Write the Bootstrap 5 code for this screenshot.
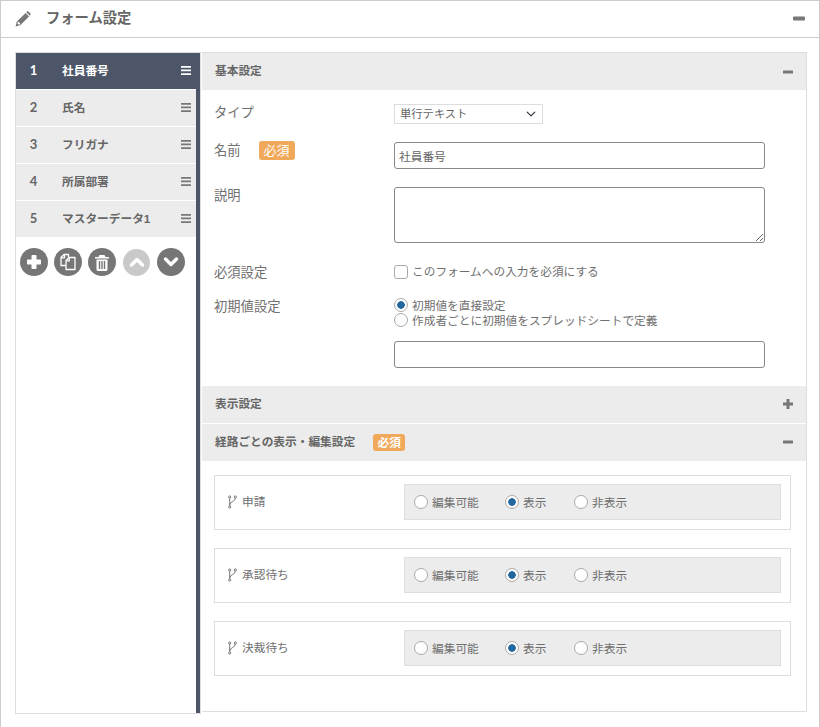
<!DOCTYPE html>
<html lang="ja">
<head>
<meta charset="utf-8">
<title>フォーム設定</title>
<link href="https://cdn.jsdelivr.net/npm/bootstrap@5.3.0/dist/css/bootstrap.min.css" rel="stylesheet">
<style>
html,body{height:727px;overflow:hidden;background:#fff}
body{font-family:"Liberation Sans","Noto Sans CJK JP",sans-serif;color:#666;font-size:12px;line-height:1.2}
.frame{height:760px;border:1px solid #ccc;border-bottom:0}
.frame-head{height:37px;border-bottom:1px solid #ccc;padding:0 14px 0 13px}
.frame-title{font-size:14.3px;font-weight:700;color:#666;margin-left:14px}
.frame-body{padding:14px 13px 0 14px;height:676px}
.side{width:186px;height:662px;border:1px solid #ddd;flex:none}
.side-inner{height:100%;border-right:4px solid #4d5668}
.step{height:36px;margin-bottom:1px;background:#ececec;color:#666;font-weight:700}
.step-on{background:#4d5668;color:#fff;margin-right:-4px}
.step-no{width:36px;padding-right:1px;font-size:13px;font-family:"Lato","Noto Sans CJK JP",sans-serif;flex:none;background:inherit}
.step-name{flex:1;margin-left:1px;height:100%;padding:0 5px 0 9px;font-size:11.7px;background:inherit}
.step-name span{padding-top:1px}
.step-on .step-name{padding-right:9px}
.bars{width:10px;height:9px;flex:none;margin-bottom:2px}
.tools{gap:6px;padding:10px 0 0 4px}
.tool{width:28px;height:28px;border-radius:50%;background:#767676;flex:none}
.tool-off{background:#c9c9c9;width:27px;height:27px;margin:0 1px}
.main{width:605px;height:660px;margin-left:1px;border:1px solid #ddd;border-left:0;flex:none}
.sec{height:37px;background:#ececec;padding:0 13px 0 13px;font-size:11.7px;font-weight:700;color:#666;margin-bottom:1px}
.sec-req{gap:18px}
.req{background:#f0a95a;color:#fff;font-size:13px;font-weight:400;border-radius:3px;width:36px;height:19px;line-height:19px;text-align:center;display:inline-block;margin-top:-2px}
.sec .req{width:32px;height:17px;line-height:17px;font-size:11.7px;font-weight:700;margin-top:0}
.form-area{padding:14px 0 18px 12px}
.fld{display:flex;margin-bottom:18px}
.fld-wide{margin-bottom:21px}
.fld-tight{margin-bottom:17px}
.fld-label{width:180px;padding-top:1px;font-size:13.3px;color:#6f6f6f;flex:none;display:flex;align-items:flex-start;gap:18px}
.tx{width:371px;height:27px;border:1px solid #888;border-radius:3px;padding:0 4px;font-size:11.7px;color:#666;display:block;outline:0;font-family:inherit}
textarea.tx{height:56px;resize:both}
.sub-input{margin-top:13px}
.pick{width:149px;height:20px;padding:0 20px 0 5px;font-size:11.3px;line-height:18px;color:#666;border:1px solid #ddd;border-radius:0;background-position:right 5px center;background-size:12px 10px;font-family:inherit}
.opt{display:flex;align-items:center;gap:4px;font-size:11.7px;color:#6f6f6f;line-height:15px;height:15px;margin:0}
.opt input{appearance:none;width:14px;height:14px;margin:0;flex:none;border:1px solid #aaa;background:#fff}
.opt input[type=checkbox]{border-radius:3px}
.opt input[type=radio]{border-radius:50%}
.opt input[type=radio]:checked{background:radial-gradient(circle,#23679f 0 3.5px,#fff 4px)}
.routes{padding:14px 15px 0 12px}
.route{height:55px;border:1px solid #ddd;margin-bottom:18px;padding:0 9px 0 13px}
.route-name{width:176px;font-size:11.7px;color:#6f6f6f;gap:5px;flex:none}
.route-opts{flex:1;height:36px;background:#ececec;border:1px solid #ddd;padding-left:9px}
.route-opts .opt:nth-child(1){width:91px}
.route-opts .opt:nth-child(2){width:69px}
</style>
</head>
<body>
<div class="frame">
  <div class="frame-head d-flex align-items-center justify-content-between">
    <div class="d-flex align-items-center">
      <svg width="18" height="18" viewBox="0 0 18 18"><path fill="#777" d="M11.6 2.900l3.500 3.500-8.900 8.900-4.600 1.100 1.100-4.600zM12.700 1.800c.6-.6 1.400-.6 2 0l1.500 1.500c.6.6.6 1.400 0 2l-.4.500-3.500-3.500z"/><path fill="#fff" d="M3.600 12.200l.9-.4 1.700 1.700-.4.900-1.100.3-1.400-1.400z"/></svg>
      <span class="frame-title">フォーム設定</span>
    </div>
    <svg width="12" height="12" viewBox="0 0 12 12"><rect y="3.500" width="12" height="4" rx="1" fill="#777"/></svg>
  </div>
  <div class="frame-body d-flex">
    <div class="side">
      <div class="side-inner">
        <div class="step step-on d-flex align-items-center"><div class="step-no d-flex align-items-center justify-content-center h-100">1</div><div class="step-name d-flex align-items-center justify-content-between"><span>社員番号</span><svg class="bars" viewBox="0 0 10 9"><path fill="#fff" d="M0 0h10v1.700H0zM0 3.600h10v1.700H0zM0 7.300h10V9H0z"/></svg></div></div>
        <div class="step d-flex align-items-center"><div class="step-no d-flex align-items-center justify-content-center h-100">2</div><div class="step-name d-flex align-items-center justify-content-between"><span>氏名</span><svg class="bars" viewBox="0 0 10 9"><path fill="#777" d="M0 0h10v1.700H0zM0 3.600h10v1.700H0zM0 7.300h10V9H0z"/></svg></div></div>
        <div class="step d-flex align-items-center"><div class="step-no d-flex align-items-center justify-content-center h-100">3</div><div class="step-name d-flex align-items-center justify-content-between"><span>フリガナ</span><svg class="bars" viewBox="0 0 10 9"><path fill="#777" d="M0 0h10v1.700H0zM0 3.600h10v1.700H0zM0 7.300h10V9H0z"/></svg></div></div>
        <div class="step d-flex align-items-center"><div class="step-no d-flex align-items-center justify-content-center h-100">4</div><div class="step-name d-flex align-items-center justify-content-between"><span>所属部署</span><svg class="bars" viewBox="0 0 10 9"><path fill="#777" d="M0 0h10v1.700H0zM0 3.600h10v1.700H0zM0 7.300h10V9H0z"/></svg></div></div>
        <div class="step d-flex align-items-center"><div class="step-no d-flex align-items-center justify-content-center h-100">5</div><div class="step-name d-flex align-items-center justify-content-between"><span>マスターデータ1</span><svg class="bars" viewBox="0 0 10 9"><path fill="#777" d="M0 0h10v1.700H0zM0 3.600h10v1.700H0zM0 7.300h10V9H0z"/></svg></div></div>
        <div class="tools d-flex align-items-center">
          <div class="tool d-flex align-items-center justify-content-center"><svg width="16" height="16" viewBox="0 0 16 16"><path fill="#fff" d="M6.300 1h3.400a.8.8 0 0 1 .8.800v3.700h3.700a.8.8 0 0 1 .8.800v3.400a.8.8 0 0 1-.8.800h-3.700v3.700a.8.8 0 0 1-.8.800H6.300a.8.8 0 0 1-.8-.8v-3.700H1.800a.8.8 0 0 1-.8-.8V6.300a.8.8 0 0 1 .8-.8h3.700V1.800a.8.8 0 0 1 .8-.8z"/></svg></div>
          <div class="tool d-flex align-items-center justify-content-center"><svg width="18" height="18" viewBox="0 0 18 18" fill="none" stroke="#fff" stroke-width="1.300" stroke-linejoin="round"><path d="M6.500 12.500H2V4.500L5 1.500h4.500v3"/><path d="M5.500 1.800V4.800H2.300"/><path d="M7 16.500V7.500L10 4.500h6v12z"/><path d="M10.300 4.800v3H7.300"/></svg></div>
          <div class="tool d-flex align-items-center justify-content-center"><svg width="16" height="17" viewBox="0 0 16 17"><path fill="#fff" d="M5.500 1h5l1 2H15v1.500H1V3h3.500zM2.500 5.500h11v9.700c0 1-.7 1.800-1.600 1.800H4.100c-.9 0-1.600-.8-1.600-1.800zM4.800 7v8h1.400V7zm2.500 0v8h1.400V7zm2.500 0v8h1.400V7z"/></svg></div>
          <div class="tool tool-off d-flex align-items-center justify-content-center"><svg width="16" height="12" viewBox="0 0 16 12"><path fill="none" stroke="#fff" stroke-width="3.400" stroke-linecap="round" stroke-linejoin="round" d="M2.500 9L8 3.500 13.500 9"/></svg></div>
          <div class="tool d-flex align-items-center justify-content-center"><svg width="16" height="12" viewBox="0 0 16 12"><path fill="none" stroke="#fff" stroke-width="3.400" stroke-linecap="round" stroke-linejoin="round" d="M2.500 3L8 8.500 13.500 3"/></svg></div>
        </div>
      </div>
    </div>
    <div class="main">
      <div class="sec d-flex align-items-center justify-content-between mb-0"><span>基本設定</span><svg width="10" height="10" viewBox="0 0 10 10"><rect y="3.500" width="10" height="3" rx=".6" fill="#777"/></svg></div>
      <div class="form-area">
        <div class="fld"><div class="fld-label">タイプ</div><select class="form-select pick"><option>単行テキスト</option></select></div>
        <div class="fld"><div class="fld-label"><span>名前</span><span class="req">必須</span></div><input class="tx" type="text" value="社員番号"></div>
        <div class="fld fld-wide"><div class="fld-label">説明</div><textarea class="tx"></textarea></div>
        <div class="fld fld-tight"><div class="fld-label">必須設定</div><label class="opt"><input type="checkbox">このフォームへの入力を必須にする</label></div>
        <div class="fld mb-0"><div class="fld-label">初期値設定</div>
          <div>
            <label class="opt"><input type="radio" name="d" checked>初期値を直接設定</label>
            <label class="opt"><input type="radio" name="d">作成者ごとに初期値をスプレッドシートで定義</label>
            <input class="tx sub-input" type="text">
          </div>
        </div>
      </div>
      <div class="sec d-flex align-items-center justify-content-between"><span>表示設定</span><svg width="10" height="10" viewBox="0 0 10 10"><path fill="#777" d="M3.500 0h3v3.500H10v3H6.500V10h-3V6.500H0v-3h3.500z"/></svg></div>
      <div class="sec d-flex align-items-center justify-content-between mb-0"><div class="d-flex align-items-center sec-req"><span>経路ごとの表示・編集設定</span><span class="req">必須</span></div><svg width="10" height="10" viewBox="0 0 10 10"><rect y="3.500" width="10" height="3" rx=".6" fill="#777"/></svg></div>
      <div class="routes">
        <div class="route d-flex align-items-center"><div class="route-name d-flex align-items-center"><svg width="9" height="14" viewBox="0 0 9 14" fill="none" stroke="#777" stroke-width="1"><circle cx="1.700" cy="2" r="1.100"/><circle cx="1.700" cy="12" r="1.100"/><circle cx="7.300" cy="2" r="1.100"/><path d="M1.700 3.100v7.800M7.300 3.100C7.300 7 2.200 6 1.700 10"/></svg><span>申請</span></div><div class="route-opts d-flex align-items-center"><label class="opt"><input type="radio" name="a">編集可能</label><label class="opt"><input type="radio" name="a" checked>表示</label><label class="opt"><input type="radio" name="a">非表示</label></div></div>
        <div class="route d-flex align-items-center"><div class="route-name d-flex align-items-center"><svg width="9" height="14" viewBox="0 0 9 14" fill="none" stroke="#777" stroke-width="1"><circle cx="1.700" cy="2" r="1.100"/><circle cx="1.700" cy="12" r="1.100"/><circle cx="7.300" cy="2" r="1.100"/><path d="M1.700 3.100v7.800M7.300 3.100C7.300 7 2.200 6 1.700 10"/></svg><span>承認待ち</span></div><div class="route-opts d-flex align-items-center"><label class="opt"><input type="radio" name="b">編集可能</label><label class="opt"><input type="radio" name="b" checked>表示</label><label class="opt"><input type="radio" name="b">非表示</label></div></div>
        <div class="route d-flex align-items-center"><div class="route-name d-flex align-items-center"><svg width="9" height="14" viewBox="0 0 9 14" fill="none" stroke="#777" stroke-width="1"><circle cx="1.700" cy="2" r="1.100"/><circle cx="1.700" cy="12" r="1.100"/><circle cx="7.300" cy="2" r="1.100"/><path d="M1.700 3.100v7.800M7.300 3.100C7.300 7 2.200 6 1.700 10"/></svg><span>決裁待ち</span></div><div class="route-opts d-flex align-items-center"><label class="opt"><input type="radio" name="c">編集可能</label><label class="opt"><input type="radio" name="c" checked>表示</label><label class="opt"><input type="radio" name="c">非表示</label></div></div>
      </div>
    </div>
  </div>
</div>
<script src="https://cdn.jsdelivr.net/npm/bootstrap@5.3.0/dist/js/bootstrap.bundle.min.js"></script>
</body>
</html>
